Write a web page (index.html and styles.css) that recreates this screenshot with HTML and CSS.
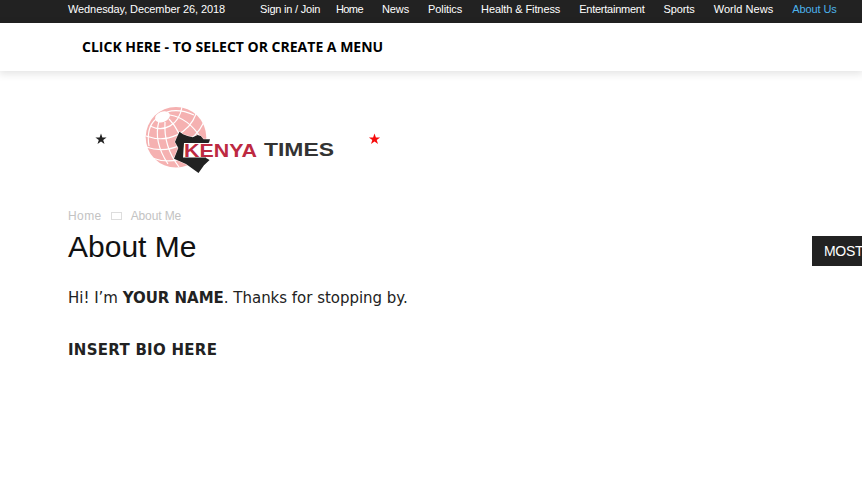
FILE: index.html
```html
<!DOCTYPE html>
<html lang="en">
<head>
    <meta charset="UTF-8">
    <meta name="viewport" content="width=device-width, initial-scale=1.0">
    <title>About Me | Kenya Times</title>
    <link rel="stylesheet" href="styles.css">
</head>
<body>
    <div class="top-bar">
        <span class="date">Wednesday, December 26, 2018</span>
        <a class="sign-in" href="#">Sign in / Join</a>
        <nav class="top-menu">
            <a class="tight" href="#">Home</a>
            <a href="#">News</a>
            <a href="#">Politics</a>
            <a href="#">Health &amp; Fitness</a>
            <a class="snug" href="#">Entertainment</a>
            <a href="#">Sports</a>
            <a class="loose" href="#">World News</a>
            <a class="current" href="#">About Us</a>
        </nav>
    </div>

    <header class="main-menu">
        <a href="#">Click here - to select or create a menu</a>
    </header>

    <div class="container">
        <a class="logo" href="#">
            <svg width="330" height="90" viewBox="68 95 330 90" role="img" aria-label="Kenya Times">
                <!-- stars -->
                <path fill="#222" d="M101 133.5l1.4 4h4.2l-3.4 2.5 1.3 4.1-3.5-2.5-3.5 2.5 1.3-4.1-3.4-2.5h4.2z"/>
                <path fill="#f60c0c" d="M374.5 133.5l1.4 4h4.2l-3.4 2.5 1.3 4.1-3.5-2.5-3.5 2.5 1.3-4.1-3.4-2.5h4.2z"/>
                <!-- globe -->
                <circle cx="176" cy="137.3" r="30.3" fill="#f5b1b1"/>
                <g fill="none" stroke="#fff" stroke-width="1.2">
                    <path d="M156 119c-7 6-9 15-7 27M159 121c-4 14-1 28 9 43M165 122c-1 16 4 32 14 45M169 119c9 9 14 21 17 36M170 115c12 2 22 9 31 23M167 112c10-3 18-1 27 3"/>
                    <path d="M150 126c14 7 29-1 32-19M146 136c22 8 43-3 50-22M146 147c24 8 48-4 58-25M152 158c14 5 27 3 37-3"/>
                </g>
                <ellipse cx="162.5" cy="116.8" rx="7.8" ry="5.2" fill="#fff" transform="rotate(-20 162.5 116.8)"/>
                <!-- country shape -->
                <path fill="#222" stroke="#fff" stroke-width=".8" paint-order="stroke" d="M179.5 131.7l3.5 2.6 4.5 1.7 5.3 1.3 4.7-2.3 3.3 1 2.7 3.3h6.5l-1 3.2-3 2.2v13.3l3.6 2-5.6 5.3-5.5 7.7-12.5-9-12-5.3 2-5 2.3-5.7-3.3-6 1.6-4z"/>
                <path fill="#fff" d="M184 143h30v14.6h-31z"/>
                <text class="logo-red" x="184" y="156.6" textLength="73" lengthAdjust="spacingAndGlyphs">KENYA</text>
                <text class="logo-dark" x="264" y="156" textLength="70" lengthAdjust="spacingAndGlyphs">TIMES</text>
            </svg>
        </a>

        <main class="columns">
            <div class="content">
                <div class="breadcrumbs">
                    <a href="#">Home</a>
                    <i class="separator"></i>
                    <span>About Me</span>
                </div>
                <h1>About Me</h1>
                <p>Hi! I’m <strong>YOUR NAME</strong>. Thanks for stopping by.</p>
                <p class="bio"><strong>INSERT BIO HERE</strong></p>
            </div>
            <aside class="sidebar">
                <h4>MOST</h4>
            </aside>
        </main>
    </div>
</body>
</html>
```

FILE: styles.css
```css
* {
    margin: 0;
    padding: 0;
    box-sizing: border-box;
}

body {
    background: #fff;
    color: #222;
    font-family: "Liberation Sans", Arial, sans-serif;
    overflow: hidden;
}

a {
    color: inherit;
    text-decoration: none;
}

.top-bar {
    display: flex;
    height: 23px;
    padding-left: 68px;
    background: #222;
    color: #fff;
    font-size: 11px;
    line-height: 19px;
    letter-spacing: -0.1px;
    white-space: nowrap;
}

.date {
    width: 192px;
}

.sign-in {
    width: 76px;
    letter-spacing: -0.2px;
}

.top-menu {
    display: flex;
    gap: 19px;
}

.tight {
    letter-spacing: -0.6px;
}

.snug {
    letter-spacing: -0.25px;
}

.loose {
    letter-spacing: 0.05px;
}

.current {
    color: #4db2ec;
}

.main-menu {
    height: 48px;
    padding-left: 82px;
    background: #fff;
    box-shadow: 0 2px 8px 1px rgba(0, 0, 0, 0.11);
    color: #000;
    font: bold 14px/48px "Open Sans", sans-serif;
    text-transform: uppercase;
}

.container {
    padding: 24px 0 0 68px;
}

.logo,
.logo svg {
    display: block;
}

.logo-red,
.logo-dark {
    font: bold 18px "Liberation Sans", sans-serif;
}

.logo-red {
    fill: #bd2941;
}

.logo-dark {
    fill: #333;
}

.columns {
    display: flex;
    gap: 48px;
    margin-top: 22px;
}

.content {
    flex: 0 0 696px;
}

.breadcrumbs {
    display: flex;
    align-items: center;
    height: 18px;
    color: #c3c3c3;
    font-size: 12px;
}

.breadcrumbs a {
    letter-spacing: 0.4px;
}

.breadcrumbs span {
    letter-spacing: -0.1px;
}

.separator {
    width: 11px;
    height: 8px;
    margin: 0 9px;
    border: 1px solid #ddd;
}

h1 {
    margin: 3px 0 19px;
    color: #111;
    font-size: 30px;
    font-weight: normal;
    line-height: 38px;
}

p {
    margin-bottom: 26px;
    font: 15px/26px Verdana, "DejaVu Sans", sans-serif;
    letter-spacing: -0.02px;
}

.bio {
    letter-spacing: 0.27px;
}

.sidebar {
    flex: 1;
    min-width: 0;
    padding-top: 29px;
}

h4 {
    height: 30px;
    padding-left: 12px;
    background: #222;
    color: #fff;
    font-size: 14px;
    font-weight: normal;
    line-height: 31px;
    letter-spacing: -0.3px;
}
```
